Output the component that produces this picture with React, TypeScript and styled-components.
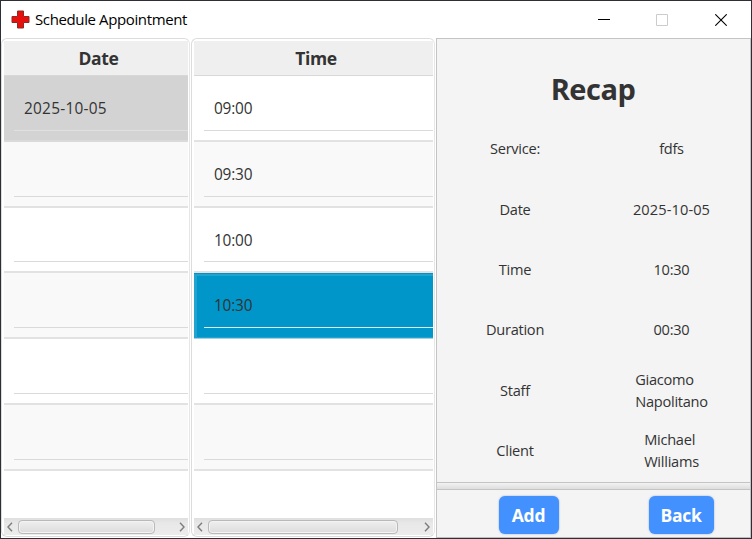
import React from "react";
import styled, { createGlobalStyle } from "styled-components";

const GlobalStyle = createGlobalStyle`
  * { box-sizing: border-box; }
  body { margin: 0; background: #fff; overflow: hidden; }
`;

const Window = styled.div`
  width: 752px;
  height: 539px;
  display: flex;
  flex-direction: column;
  background: #fff;
  border: 1px solid #2e2e36;
  font-family: "Open Sans", "Noto Sans", sans-serif;
  color: #333;
`;

const TitleBar = styled.header`
  height: 37px;
  flex: none;
  display: flex;
  align-items: center;
  padding: 0 1px 0 10px;
  color: #000;
`;

const Title = styled.span`
  flex: 1;
  margin-left: 5px;
  padding-bottom: 1px;
  font-size: 15px;
  line-height: 20px;
  letter-spacing: -0.38px;
`;

const Caption = styled.div`
  width: 58.5px;
  height: 36px;
  display: flex;
  align-items: center;
  justify-content: center;
`;

const Body = styled.main`
  flex: 1;
  min-height: 0;
  display: flex;
`;

const List = styled.section<{ $width: number; $gap: number }>`
  width: ${(p) => p.$width}px;
  margin-left: ${(p) => p.$gap}px;
  height: 499px;
  flex: none;
  display: flex;
  flex-direction: column;
  border: 1px solid #dcdcdc;
  border-right-color: #e6e6e6;
  border-radius: 6px;
  padding: 2px 1px 1px 2px;
`;

const ListHeader = styled.div`
  height: 35px;
  flex: none;
  background: #efefef;
  border-bottom: 1px solid #d8d8d8;
  text-align: center;
  font-weight: 700;
  font-size: 17.5px;
  line-height: 35px;
  padding-left: 5px;
  letter-spacing: -0.4px;
`;

type Tone = "plain" | "alt" | "muted" | "active";
const toneFill: Record<Tone, string> = {
  plain: "#fff",
  alt: "#f9f9f9",
  muted: "#d3d3d3",
  active: "#0096c9",
};

const Row = styled.div<{ $tone: Tone; $height: number }>`
  height: ${(p) => p.$height}px;
  flex: none;
  padding-left: 10px;
  background: ${(p) => toneFill[p.$tone]};
  border-bottom: ${(p) => (p.$tone === "active" ? "1px solid #a4cfdf" : "2px solid #e2e2e2")};
  ${(p) => p.$tone === "muted" && "border-bottom-color: #dadada;"}
  ${(p) =>
    p.$tone === "active" &&
    "box-shadow: inset 0 1px #0d8ebb, inset 3px 0 #21a3d0, inset 0 3px #21a3d0, inset 0 -1px #21a3d0;"}
`;

const Cell = styled.div<{ $tone: Tone; $height: number }>`
  height: ${(p) => p.$height - 11}px;
  padding: 1px 0 0 10px;
  border-bottom: 1px solid
    ${(p) => (p.$tone === "active" ? "#d9edf5" : p.$tone === "muted" ? "#e0e0e0" : "#dadada")};
  font-size: 15.4px;
  line-height: 64px;
  letter-spacing: ${(p) => (p.$tone === "muted" ? 0.26 : -0.2)}px;
`;

const LastRow = styled.div`
  flex: 1;
  background: #fff;
`;

const ScrollBar = styled.div`
  height: 17px;
  flex: none;
  display: flex;
  align-items: center;
  background: linear-gradient(#dedede, #e8e8e8 30%, #ececec);
`;

const Arrow = styled.div`
  width: 14px;
  height: 17px;
  flex: none;
  display: flex;
  align-items: center;
  justify-content: center;
`;

const BackArrow = styled(Arrow)`
  padding-right: 3px;
`;

const ForwardArrow = styled(Arrow)`
  padding-left: 2px;
`;

const Track = styled.div`
  flex: 1;
`;

const Thumb = styled.div<{ $width: number }>`
  width: ${(p) => p.$width}px;
  height: 14px;
  margin-top: 1px;
  border: 1px solid #b9b9b9;
  border-radius: 4px;
  background: linear-gradient(#efefef, #dcdcdc);
  box-shadow: inset 0 0 0 1px #f3f3f3;
`;

const Side = styled.aside`
  flex: 1;
  margin-left: 1px;
  display: flex;
  flex-direction: column;
  border: 1px solid #c4c4c4;
  border-bottom-color: #bdbdbd;
  background: #f4f4f4;
`;

const Recap = styled.div`
  height: 443px;
  flex: none;
  padding-top: 20px;
`;

const Heading = styled.h1`
  margin: 0;
  height: 59px;
  padding-right: 1px;
  text-align: center;
  font-size: 29px;
  line-height: 59px;
  letter-spacing: -0.5px;
`;

const Details = styled.div`
  display: grid;
  grid-template-columns: 156px 157px;
  grid-auto-rows: 60.4px;
`;

const Detail = styled.div<{ $spacing?: number }>`
  display: flex;
  align-items: center;
  justify-content: center;
  font-size: 14.6px;
  line-height: 22px;
  white-space: pre;
  letter-spacing: ${(p) => p.$spacing ?? -0.26}px;
`;

const Divider = styled.div`
  height: 8px;
  flex: none;
  border: solid #c4c4c4;
  border-width: 1px 0;
  background: linear-gradient(#f3f3f3, #dedede);
`;

const Actions = styled.div`
  flex: 1;
  display: grid;
  grid-template-columns: 183px 122px;
  justify-items: center;
  align-items: center;
  padding-top: 3px;
`;

const ActionButton = styled.button<{ $width: number }>`
  width: ${(p) => p.$width}px;
  height: 38px;
  padding: 0;
  border: 0;
  border-radius: 6px;
  background: #4291ff;
  box-shadow: 0 0 2px rgba(60, 110, 180, 0.55);
  color: #fff;
  font: 700 17.5px/36px "Open Sans", sans-serif;
  letter-spacing: -0.3px;
  padding-bottom: 1px;
`;

const CrossIcon = () => (
  <svg width="19" height="19" viewBox="0 0 19 19">
    <path
      d="M6.5 1h6v5.5H18v6h-5.5V18h-6v-5.5H1v-6h5.5z"
      fill="#e8100c"
      stroke="#8e2924"
      strokeLinejoin="round"
    />
  </svg>
);

const Chevron = ({ right = false }: { right?: boolean }) => (
  <svg width="6" height="10" viewBox="0 0 6 10" fill="none" stroke="#7c7c7c" strokeWidth="1.4">
    <path d={right ? "M1 .8 5 5 1 9.2" : "M5 .8 1 5 5 9.2"} />
  </svg>
);

const rowHeights = [66, 66, 65, 66, 66, 66];

interface ColumnProps {
  title: string;
  values: string[];
  selected: number;
  selectedTone: Tone;
  width: number;
  gap: number;
  thumb: number;
}

const Column = ({ title, values, selected, selectedTone, width, gap, thumb }: ColumnProps) => (
  <List $width={width} $gap={gap}>
    <ListHeader>{title}</ListHeader>
    {rowHeights.map((height, i) => {
      const tone: Tone = i === selected ? selectedTone : i % 2 ? "alt" : "plain";
      return (
        <Row key={i} $tone={tone} $height={height}>
          <Cell $tone={tone} $height={height}>
            {values[i]}
          </Cell>
        </Row>
      );
    })}
    <LastRow />
    <ScrollBar>
      <BackArrow>
        <Chevron />
      </BackArrow>
      <Track>
        <Thumb $width={thumb} />
      </Track>
      <ForwardArrow>
        <Chevron right />
      </ForwardArrow>
    </ScrollBar>
  </List>
);

const details: { label: string; value: string; spacing?: number }[] = [
  { label: "Service:", value: "fdfs" },
  { label: "Date", value: "2025-10-05", spacing: 0.1 },
  { label: "Time", value: "10:30" },
  { label: "Duration", value: "00:30" },
  { label: "Staff", value: "Giacomo\nNapolitano" },
  { label: "Client", value: "Michael\nWilliams" },
];

export default function App() {
  return (
    <Window>
      <GlobalStyle />
      <TitleBar>
        <CrossIcon />
        <Title>Schedule Appointment</Title>
        <Caption>
          <svg width="12" height="12">
            <path d="M0 5.5h12" stroke="#000" />
          </svg>
        </Caption>
        <Caption>
          <svg width="12" height="12">
            <path d="M.5.5h11v11H.5z" fill="none" stroke="#ccc" />
          </svg>
        </Caption>
        <Caption>
          <svg width="12" height="12">
            <path d="m.3.3 11.4 11.4M11.7.3.3 11.7" stroke="#000" strokeWidth="1.1" />
          </svg>
        </Caption>
      </TitleBar>
      <Body>
        <Column
          title="Date"
          values={["2025-10-05"]}
          selected={0}
          selectedTone="muted"
          width={189}
          gap={0}
          thumb={137}
        />
        <Column
          title="Time"
          values={["09:00", "09:30", "10:00", "10:30"]}
          selected={3}
          selectedTone="active"
          width={244}
          gap={1}
          thumb={190}
        />
        <Side>
          <Recap>
            <Heading>Recap</Heading>
            <Details>
              {details.map(({ label, value, spacing }) => (
                <React.Fragment key={label}>
                  <Detail>{label}</Detail>
                  <Detail $spacing={spacing}>{value}</Detail>
                </React.Fragment>
              ))}
            </Details>
          </Recap>
          <Divider />
          <Actions>
            <ActionButton $width={60}>Add</ActionButton>
            <ActionButton $width={65}>Back</ActionButton>
          </Actions>
        </Side>
      </Body>
    </Window>
  );
}
